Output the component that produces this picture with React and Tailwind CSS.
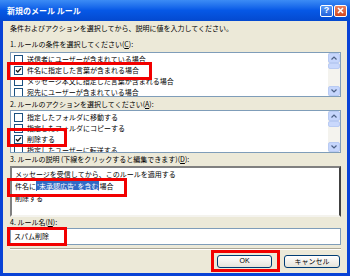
import React from 'react';

const jp = "font-['Noto_Sans_CJK_JP',sans-serif]";

function Check({ checked }) {
  return (
    <span className="w-[9px] h-[9px] shrink-0 border border-[#1C5180] bg-white flex items-center justify-center">
      {checked && (
        <svg width="7" height="7" viewBox="0 0 7 7">
          <path d="M1 3.2 L2.8 5 L6 1.4" stroke="#1a1a1a" strokeWidth="1.4" fill="none" />
        </svg>
      )}
    </span>
  );
}

function ScrollBar() {
  return (
    <div className="w-[12px] h-full shrink-0 flex flex-col bg-[#F4F3EE]">
      <div className="h-[10px] rounded-[2px] border border-[#B9CBF3] bg-[#C6D6FC] flex items-center justify-center">
        <svg width="6" height="4" viewBox="0 0 6 4"><path d="M0.5 3.5 L3 1 L5.5 3.5" stroke="#4D6185" strokeWidth="1.2" fill="none" /></svg>
      </div>
      <div className="h-[6px] rounded-[2px] border border-[#B9CBF3] bg-[#C9D8FC]" />
      <div className="flex-1" />
      <div className="h-[10px] rounded-[2px] border border-[#B9CBF3] bg-[#C6D6FC] flex items-center justify-center">
        <svg width="6" height="4" viewBox="0 0 6 4"><path d="M0.5 0.5 L3 3 L5.5 0.5" stroke="#4D6185" strokeWidth="1.2" fill="none" /></svg>
      </div>
    </div>
  );
}

function CheckList({ items, height }) {
  return (
    <div className={`flex border border-[#7F9DB9] bg-white ${height}`}>
      <div className="flex-1 overflow-hidden pt-[1px] pl-[3px]">
        {items.map((it, i) => (
          <div key={i} className="h-[11px] flex items-center gap-[4px] whitespace-nowrap">
            <Check checked={it.checked} />
            <span>{it.label}</span>
          </div>
        ))}
      </div>
      <ScrollBar />
    </div>
  );
}

function Label({ children }) {
  return <div className="h-[10px] leading-[10px] whitespace-nowrap">{children}</div>;
}

const conditions = [
  { label: '送信者にユーザーが含まれている場合' },
  { label: '件名に指定した言葉が含まれる場合', checked: true },
  { label: 'メッセージ本文に指定した言葉が含まれる場合' },
  { label: '宛先にユーザーが含まれている場合' },
];

const actions = [
  { label: '指定したフォルダに移動する' },
  { label: '指定したフォルダにコピーする' },
  { label: '削除する', checked: true },
  { label: '指定したユーザーに転送する' },
];

export default function App() {
  return (
    <div className={`relative w-[350px] h-[276px] overflow-hidden bg-[#0842D6] text-[7px] text-black ${jp}`}>
      {/* title bar */}
      <div className="h-[21px] flex items-center justify-between pl-[7px] pr-[3px] bg-linear-to-b from-[#3C8CF5] via-[#0658E6] to-[#0449CF]">
        <span className="text-white font-bold text-[8px]">新規のメール ルール</span>
        <div className="flex gap-[1px] items-center">
          <div className="w-[13px] h-[12px] rounded-[2px] border border-white bg-linear-to-b from-[#5A9BF8] to-[#2361DA] flex items-center justify-center text-white font-bold text-[9px] leading-none font-['Liberation_Sans',sans-serif]">?</div>
          <div className="w-[13px] h-[12px] rounded-[2px] border border-white bg-linear-to-b from-[#E9825F] to-[#D2451D] flex items-center justify-center">
            <svg width="7" height="7" viewBox="0 0 7 7"><path d="M1 1 L6 6 M6 1 L1 6" stroke="#fff" strokeWidth="1.6" /></svg>
          </div>
        </div>
      </div>

      {/* body */}
      <div className="mx-[3px] h-[252px] bg-[#ECE9D8] pl-[7px] pr-[6px] pt-[2px] flex flex-col">
        <Label>条件およびアクションを選択してから、説明に値を入力してください。</Label>
        <div className="mt-[6px]">
          <Label>1. ルールの条件を選択してください(<span className="underline">C</span>):</Label>
        </div>
        <div className="mt-[3px]">
          <CheckList items={conditions} height="h-[45px]" />
        </div>
        <div className="mt-[2px]">
          <Label>2. ルールのアクションを選択してください(<span className="underline">A</span>):</Label>
        </div>
        <div className="mt-[1px]">
          <CheckList items={actions} height="h-[43px]" />
        </div>
        <div className="mt-[1px]">
          <Label>3. ルールの説明 (下線をクリックすると編集できます)(<span className="underline">D</span>):</Label>
        </div>
        <div className="mt-[2px] h-[51px] border-2 border-t-[#808080] border-l-[#808080] border-b-[#F4F3EE] border-r-[#404040] bg-white pl-[3px] overflow-hidden">
          <div className="h-[12px] leading-[12px] whitespace-nowrap">メッセージを受信してから、このルールを適用する</div>
          <div className="h-[12px] leading-[12px] whitespace-nowrap flex items-center">
            <span>件名に</span>
            <span className="bg-[#316AC5] text-white underline leading-[10px] px-[1px]">'未承認広告' を含む</span>
            <span>場合</span>
          </div>
          <div className="h-[12px] leading-[12px] whitespace-nowrap">削除する</div>
        </div>
        <div>
          <Label>4. ルール名(<span className="underline">N</span>):</Label>
        </div>
        <div className="mt-[1px] h-[17px] border border-[#7F9DB9] bg-white pl-[3px] flex items-center">
          スパム削除
        </div>
        <div className="mt-[3px] h-[2px] border-t border-t-[#ACA899] border-b border-b-white" />
        <div className="mt-[5px] flex justify-end gap-[12px] pr-[1px]">
          <div className="w-[55px] h-[13px] rounded-[3px] border border-[#003C74] bg-linear-to-b from-white to-[#E6E4DA] flex items-center justify-center font-['Liberation_Sans',sans-serif]">OK</div>
          <div className="w-[56px] h-[13px] rounded-[3px] border border-[#003C74] bg-linear-to-b from-white to-[#E6E4DA] flex items-center justify-center">キャンセル</div>
        </div>
      </div>

      {/* red annotation boxes */}
      <div className="absolute left-[7px] top-[62px] w-[145px] h-[18px] border-[3px] border-[#F20000]" />
      <div className="absolute left-[7px] top-[128px] w-[60px] h-[19px] border-[3px] border-[#F20000]" />
      <div className="absolute left-[7px] top-[178px] w-[120px] h-[19px] border-[3px] border-[#F20000]" />
      <div className="absolute left-[7px] top-[227px] w-[60px] h-[19px] border-[3px] border-[#F20000]" />
      <div className="absolute left-[211px] top-[250px] w-[69px] h-[22px] border-[3px] border-[#F20000]" />
    </div>
  );
}
